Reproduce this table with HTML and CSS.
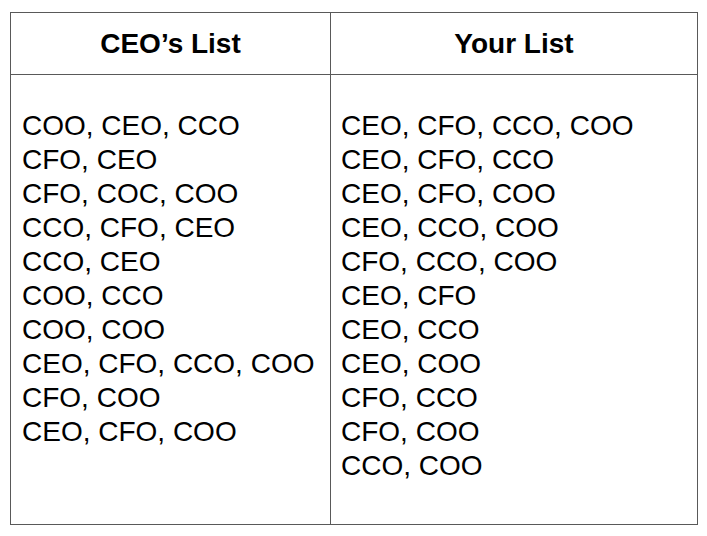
FILE: index.html
```html
<!DOCTYPE html>
<html>
<head>
<meta charset="utf-8">
<link rel="stylesheet" href="styles.css">
</head>
<body>
<div class="table">
  <div class="cell head head-first">CEO’s List</div>
  <div class="cell head">Your List</div>
  <div class="cell body body-first">
    <div>COO, CEO, CCO</div>
    <div>CFO, CEO</div>
    <div>CFO, COC, COO</div>
    <div>CCO, CFO, CEO</div>
    <div>CCO, CEO</div>
    <div>COO, CCO</div>
    <div>COO, COO</div>
    <div>CEO, CFO, CCO, COO</div>
    <div>CFO, COO</div>
    <div>CEO, CFO, COO</div>
  </div>
  <div class="cell body body-second">
    <div>CEO, CFO, CCO, COO</div>
    <div>CEO, CFO, CCO</div>
    <div>CEO, CFO, COO</div>
    <div>CEO, CCO, COO</div>
    <div>CFO, CCO, COO</div>
    <div>CEO, CFO</div>
    <div>CEO, CCO</div>
    <div>CEO, COO</div>
    <div>CFO, CCO</div>
    <div>CFO, COO</div>
    <div>CCO, COO</div>
  </div>
</div>
</body>
</html>
```
FILE: styles.css
```css
html, body {
  margin: 0;
  padding: 0;
  background: #ffffff;
}

body {
  font-family: "Liberation Sans", Arial, sans-serif;
  color: #000000;
}

.table {
  box-sizing: border-box;
  margin: 12px 0 0 10px;
  width: 688px;
  height: 513px;
  display: grid;
  grid-template-columns: 320px 366px;
  grid-template-rows: 62px 449px;
  border: 1px solid #595959;
}

.cell {
  box-sizing: border-box;
}

.head {
  display: flex;
  align-items: center;
  justify-content: center;
  font-weight: bold;
  font-size: 28px;
  line-height: 34px;
  border-bottom: 1px solid #595959;
}

.head-first,
.body-first {
  border-right: 1px solid #595959;
}

.body {
  font-size: 28px;
  line-height: 34px;
  padding-top: 34px;
  white-space: nowrap;
}

.body-first {
  padding-left: 11px;
}

.body-second {
  padding-left: 10px;
}
```
